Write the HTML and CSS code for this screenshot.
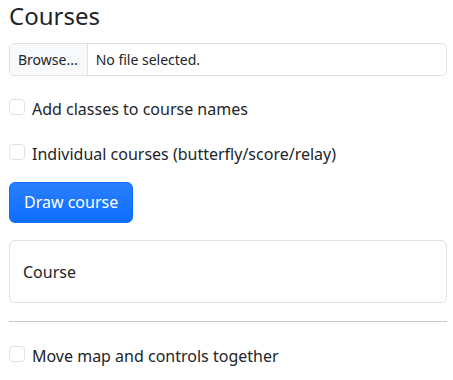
FILE: index.html
```html
<!DOCTYPE html>
<html lang="en">
<head>
    <meta charset="UTF-8">
    <meta name="viewport" content="width=device-width, initial-scale=1.0">
    <title>Courses</title>
    <link rel="stylesheet" href="styles.css">
</head>
<body>
    <div class="container">
        <h4 class="title">Courses</h4>

        <div class="file-input">
            <span class="file-btn">Browse...</span>
            <span class="file-name">No file selected.</span>
        </div>

        <label class="form-check first">
            <span class="check-box"></span>
            <span>Add classes to course names</span>
        </label>

        <label class="form-check">
            <span class="check-box"></span>
            <span>Individual courses (butterfly/score/relay)</span>
        </label>

        <div class="actions">
            <button class="btn-primary">Draw course</button>
        </div>

        <div class="card">
            <div class="card-body">Course</div>
        </div>

        <hr>

        <label class="form-check last">
            <span class="check-box"></span>
            <span>Move map and controls together</span>
        </label>
    </div>
</body>
</html>
```

FILE: styles.css
```css
body {
    margin: 0;
    padding: 0;
    background: #fff;
    color: #212529;
    font-family: "Noto Sans", "Open Sans", Arial, sans-serif;
    font-size: 16px;
}

.container {
    width: 438px;
    padding: 0 6px 0 9px;
    display: flex;
    flex-direction: column;
}

.title {
    margin: 1px 0 0 0;
    font-size: 24px;
    font-weight: 400;
    line-height: 29px;
}

/* fake file input */
.file-input {
    margin-top: 13px;
    display: flex;
    height: 31px;
    border: 1px solid #dee2e6;
    border-radius: 5px;
    overflow: hidden;
    font-size: 14px;
    line-height: 31px;
}
.file-btn {
    background: #f8f9fa;
    border-right: 1px solid #dee2e6;
    padding: 0 9px 0 8px;
}
.file-name {
    padding: 0 8px;
}

/* checkboxes */
.form-check {
    display: flex;
    align-items: flex-start;
    gap: 7px;
    line-height: 24px;
    margin-top: 21px;
}
.check-box {
    width: 14px;
    height: 14px;
    margin-top: 2px;
    border: 1px solid #dee2e6;
    border-radius: 4px;
    background: #fff;
    flex-shrink: 0;
}

.actions {
    margin-top: 16px;
}
.btn-primary {
    font-family: inherit;
    font-size: 16px;
    line-height: 25px;
    padding: 7px 14px;
    color: #fff;
    background: linear-gradient(#2a7ffd, #0d6efd);
    border: 1px solid #0d6efd;
    border-radius: 6px;
    cursor: pointer;
}

.card {
    margin-top: 17px;
    border: 1px solid #dee2e6;
    border-radius: 6px;
}
.card-body {
    padding: 19px 13px 17px;
    line-height: 25px;
}

hr {
    width: 100%;
    margin: 18px 0 0 0;
    border: none;
    border-top: 1px solid #c8c8c8;
}

.form-check.last {
    margin-top: 22px;
}
```
